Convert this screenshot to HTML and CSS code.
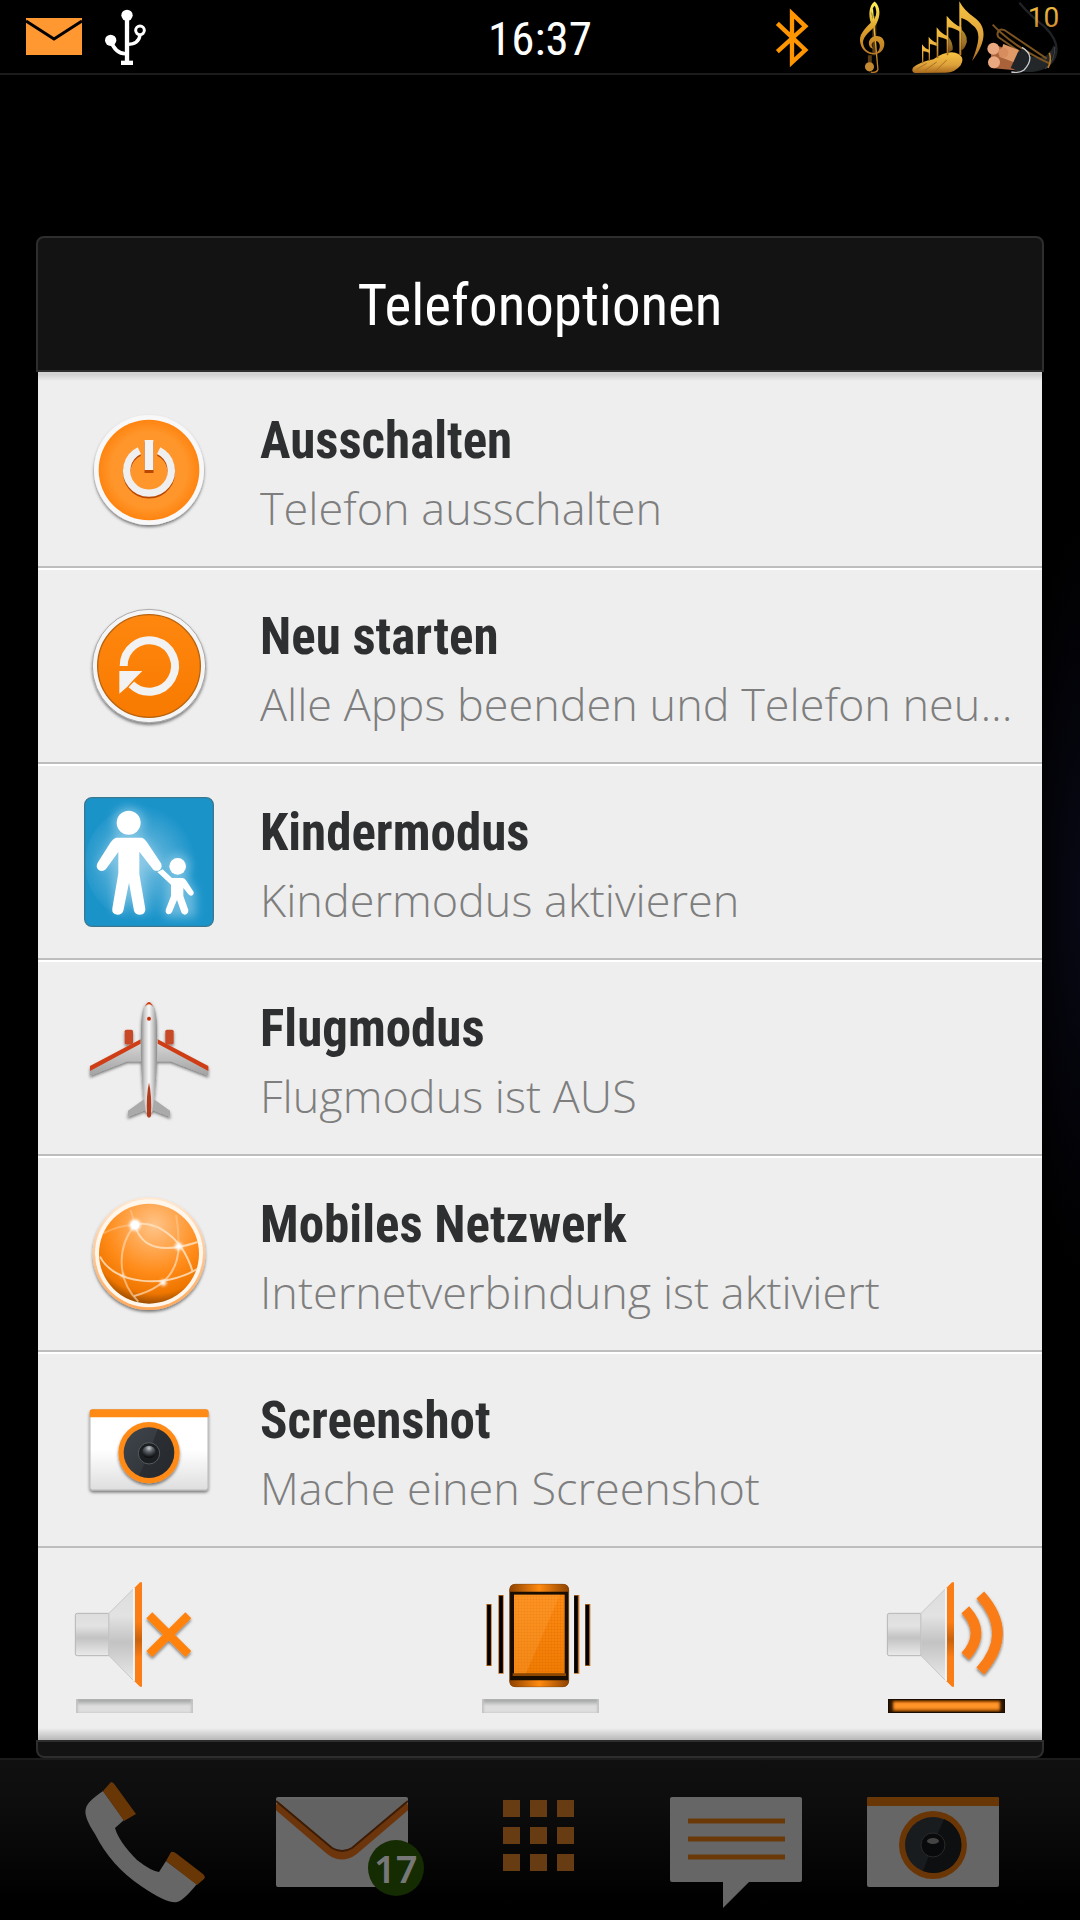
FILE: index.html
```html
<!DOCTYPE html>
<html lang="de">
<head>
<meta charset="utf-8">
<meta name="viewport" content="width=device-width, initial-scale=1">
<title>Telefonoptionen</title>
<link rel="stylesheet" href="styles.css">
</head>
<body>
<svg class="defs" aria-hidden="true">
  <defs>
    <linearGradient id="disc" x1="0" y1="0" x2="0" y2="1"><stop offset="0" stop-color="#ff870f"/><stop offset="1" stop-color="#f87a00"/></linearGradient>
    <radialGradient id="discSoft"><stop offset=".75" stop-color="#ff962b"/><stop offset="1" stop-color="#ff8410"/></radialGradient>
    <radialGradient id="sky" cx=".45" cy=".5" r=".5"><stop offset="0" stop-color="#7cc1e2"/><stop offset=".5" stop-color="#4dabd6"/><stop offset="1" stop-color="#1a93c9"/></radialGradient>
    <linearGradient id="hull"><stop offset="0" stop-color="#8a8a8a"/><stop offset=".25" stop-color="#d0d0d0"/><stop offset=".5" stop-color="#f8f8f8"/><stop offset=".75" stop-color="#c8c8c8"/><stop offset="1" stop-color="#8a8a8a"/></linearGradient>
    <linearGradient id="wing" x1="0" y1="0" x2="0" y2="1"><stop offset="0" stop-color="#dadada"/><stop offset="1" stop-color="#a2a2a2"/></linearGradient>
    <radialGradient id="globe" cx=".55" cy=".22" r=".8"><stop offset="0" stop-color="#ffc489"/><stop offset=".3" stop-color="#ffa750"/><stop offset=".6" stop-color="#ff8a17"/><stop offset=".85" stop-color="#ee7600"/><stop offset="1" stop-color="#8e4600"/></radialGradient>
    <linearGradient id="ring" x1="0" y1="0" x2="0" y2="1"><stop offset="0" stop-color="#ffe8d2"/><stop offset="1" stop-color="#ffa85a"/></linearGradient>
    <linearGradient id="case" x1="0" y1="0" x2="0" y2="1"><stop offset=".5" stop-color="#fff"/><stop offset="1" stop-color="#dedede"/></linearGradient>
    <linearGradient id="lens" x1="0" y1="0" x2="1" y2="1"><stop offset="0" stop-color="#3f454b"/><stop offset="1" stop-color="#2b2f34"/></linearGradient>
    <radialGradient id="glint" cx=".5" cy=".2" r=".7"><stop offset="0" stop-color="#c8ccd0"/><stop offset=".4" stop-color="#60666d"/><stop offset="1" stop-color="#101214"/></radialGradient>
    <linearGradient id="horn" x1="0" y1="0" x2="0" y2="1"><stop offset="0" stop-color="#ddd"/><stop offset=".3" stop-color="#e2e2e2"/><stop offset=".58" stop-color="#c3c3c3"/><stop offset="1" stop-color="#eaeaea"/></linearGradient>
    <linearGradient id="rim" x1="0" y1="0" x2="0" y2="1"><stop offset=".38" stop-color="#fb7d15"/><stop offset=".55" stop-color="#c9630e"/><stop offset=".72" stop-color="#fb7d15"/></linearGradient>
    <linearGradient id="cap"><stop offset="0" stop-color="#8e4300"/><stop offset=".5" stop-color="#ff8a10"/><stop offset="1" stop-color="#8e4300"/></linearGradient>
    <linearGradient id="screen" x1="0" y1="0" x2="0" y2="1"><stop offset="0" stop-color="#ff8b14"/><stop offset="1" stop-color="#f27c02"/></linearGradient>
    <linearGradient id="gold" x1="0" y1="0" x2="0" y2="1"><stop offset="0" stop-color="#fff35a"/><stop offset=".5" stop-color="#e0a42c"/><stop offset="1" stop-color="#b87824"/></linearGradient>
    <linearGradient id="brass" x1="0" y1="0" x2="0" y2="1"><stop offset="0" stop-color="#f7c440"/><stop offset=".6" stop-color="#dea23c"/><stop offset="1" stop-color="#a86a1c"/></linearGradient>
    <filter id="drop" x="-20%" y="-20%" width="140%" height="150%"><feDropShadow dx="0" dy="6" stdDeviation="5" flood-opacity=".5"/></filter>
    <filter id="glow" x="-40%" y="-40%" width="180%" height="180%"><feGaussianBlur stdDeviation="14"/></filter>
    <filter id="soft" x="-100%" y="-100%" width="300%" height="300%"><feGaussianBlur stdDeviation="4"/></filter>
    <pattern id="mesh" width="9" height="9" patternUnits="userSpaceOnUse"><path d="M0 0H9M0 0V9" stroke="#c96200" stroke-width="3" opacity=".4"/></pattern>
    <clipPath id="globeClip"><circle cx="237" cy="821" r="150"/></clipPath>
    <g id="speaker">
      <path d="M322 256q0-6 6-6H423V377H328q-6 0-6-6Z" fill="url(#horn)" stroke="#b5b5b5" stroke-width="3"/>
      <path d="M423 250L501 172V456L423 377Z" fill="url(#horn)" stroke="#c9c9c9" stroke-width="3"/>
      <path d="M498 174V453" stroke="#fff" stroke-width="4"/>
      <path d="M501 172L516 157H522V470H516L501 455Z" fill="url(#rim)"/>
    </g>
  </defs>
</svg>

<header class="status">
  <div class="status-left">
    <svg width="56" height="38" viewBox="0 0 56 38" role="img" aria-label="Neue Nachricht"><path d="M0 0H56V37H0Z" fill="#ff9830"/><path d="M0 3L28 21L56 3" fill="none" stroke="#000" stroke-width="3"/></svg>
    <svg width="42" height="56" viewBox="0 0 126 168" role="img" aria-label="USB" fill="none" stroke="#fff" stroke-width="13"><circle cx="66" cy="19" r="17" fill="#fff" stroke="none"/><path d="M66 20V158"/><path d="M48 163H84" stroke-width="16"/><path d="M17 95Q32 137 66 134" stroke-width="11"/><path d="M66 106Q101 107 105 78" stroke-width="10"/><circle cx="17" cy="94" r="17" fill="#fff" stroke="none"/><circle cx="105" cy="64" r="13" stroke-width="9" fill="#000"/></svg>
  </div>
  <time class="clock">16:37</time>
  <div class="status-right">
    <svg viewBox="132 0 222 219" role="img" aria-label="Bluetooth"><path d="M172 70L256 150L216 187V41L256 79L172 155" fill="none" stroke="#ff9500" stroke-width="13"/></svg>
    <svg viewBox="354 0 222 225" role="img" aria-label="Musik" fill="none" stroke="url(#gold)"><path d="M449 205L449 170M463 50V170" stroke="#5a3d14" stroke-width="12"/><path d="M457 28L474 214Q470 226 452 222" stroke-width="4"/><path d="M464 5C445 18 445 48 452 70C430 92 414 108 420 134C426 160 450 172 472 166C493 160 500 132 488 118C474 104 448 112 446 132C446 146 454 150 460 150C450 138 456 126 468 126C482 128 484 150 472 160C452 170 430 154 428 132C428 108 454 96 468 76C484 50 482 20 464 5ZM464 18C472 32 470 52 460 62C452 48 454 28 464 18Z" fill="url(#gold)" stroke="none" fill-rule="evenodd"/><circle cx="448" cy="206" r="14" fill="#c48a32" stroke="none"/></svg>
    <svg viewBox="576 0 222 219" role="img" aria-label="Signal"><g fill="url(#brass)"><path d="M580 202Q604 184 640 178Q676 152 706 158Q738 168 722 196Q704 220 672 218L584 219Q572 214 580 202Z"/><path d="M718 4Q732 32 766 55C804 84 796 130 756 184C774 134 788 96 756 74Q740 58 724 54V166H718Z"/><path d="M680 47Q702 74 724 82V98Q704 84 685 82V166H680Z"/><path d="M650 82Q666 104 684 108V120Q668 112 655 110V174H650Z"/><path d="M626 110Q636 124 650 128V138Q640 134 630 132V182H626Z"/><path d="M606 133Q616 148 630 150V160Q618 154 610 154V190H606Z"/><path d="M724 88Q750 112 736 138Q730 150 724 150ZM685 110Q700 128 698 150L685 158Z" opacity=".7"/></g><path d="M590 208L620 190M614 212L650 186M646 214L680 180" stroke="#a86f22" stroke-width="3"/></svg>
    <svg viewBox="798 0 222 219" role="img" aria-label="Akku 10 Prozent" fill="none"><path d="M898 8Q930 46 976 82Q1020 126 1006 168Q988 218 900 212" stroke="#202225" stroke-width="7"/><path d="M926 166Q980 190 1002 134Q1006 206 930 216Q900 214 880 200Z" fill="#24272a"/><path d="M1004 140Q1006 180 976 206" stroke="#3a3f44" stroke-width="4"/><path d="M818 74L838 94Q900 150 988 190M838 90Q828 102 836 112L906 160M838 90Q850 86 862 96L980 176" stroke="#7a5320" stroke-width="6"/><path d="M988 158Q996 180 984 204" stroke="#b67a24" stroke-width="5"/><path d="M814 132L900 158L896 212L812 204Z" fill="#a9623a"/><path d="M850 132L896 150L890 190L838 170Z" fill="#e09a68"/><path d="M910 146Q944 178 902 216L872 204L894 156Z" fill="#202428"/><path d="M906 142Q950 168 912 210Q898 220 874 216" stroke="#c8ccd0" stroke-width="4"/><circle cx="820" cy="146" r="18" fill="#eaa880"/><circle cx="822" cy="187" r="18" fill="#eba982"/><circle cx="850" cy="158" r="15" fill="#d78d5e"/><text x="1018" y="80" text-anchor="end" class="battery-text" fill="url(#brass)">10</text></svg>
  </div>
</header>

<main class="stage">
  <section class="dialog" role="dialog" aria-labelledby="dialog-title">
    <h1 class="dialog-head" id="dialog-title">Telefonoptionen</h1>
    <ul class="options">
      <li><button class="option" type="button">
        <svg viewBox="0 0 390 390" aria-hidden="true"><circle cx="195" cy="195" r="165" fill="#f8f8f8" filter="url(#drop)"/><circle cx="195" cy="195" r="151" fill="url(#discSoft)"/><path d="M224 142A67 67 0 1 1 166 142" fill="none" stroke="#b84700" stroke-width="22"/><path d="M195 110V204" stroke="#b84700" stroke-width="27"/><path d="M224 137A67 67 0 1 1 166 137" fill="none" stroke="#efefef" stroke-width="22"/><path d="M195 105V195" stroke="#f2f2f2" stroke-width="26"/></svg>
        <span class="copy"><strong>Ausschalten</strong><span>Telefon ausschalten</span></span></button></li>
      <li><button class="option" type="button">
        <svg viewBox="42 33 390 390" aria-hidden="true"><circle cx="237" cy="228" r="170" fill="#f5f5f5" stroke="#888" stroke-width="2" filter="url(#drop)"/><circle cx="237" cy="228" r="154" fill="url(#disc)" stroke="#b8640f" stroke-width="4"/><path d="M161 228A77 77 0 1 1 184 283" fill="none" stroke="#f2f2f2" stroke-width="24"/><path d="M148 243H217L192 268L172 290L148 311Z" fill="#f2f2f2"/></svg>
        <span class="copy"><strong>Neu starten</strong><span>Alle Apps beenden und Telefon neu...</span></span></button></li>
      <li><button class="option" type="button">
        <svg viewBox="42 621 390 390" aria-hidden="true"><rect x="44" y="623" width="386" height="386" rx="22" fill="#1a93c9"/><circle cx="220" cy="820" r="175" fill="url(#sky)"/>
          <g fill="#9bd2eb" stroke="#9bd2eb" stroke-width="24" filter="url(#glow)" opacity=".6"><circle cx="176" cy="697" r="34"/><path d="M146 745H208L270 835L210 800V860L215 965L177 880L144 965V790L95 830Z"/><circle cx="323" cy="829" r="24"/><path d="M302 865H340L365 908V970H295Z"/></g>
          <rect x="44" y="623" width="386" height="386" rx="22" fill="none" stroke="#3a7891" stroke-width="4"/>
          <g fill="#fff"><circle cx="176" cy="698" r="36"/><circle cx="323" cy="829" r="25"/><path d="M138 743H216Q222 745 230 755L273 820Q278 832 270 839Q260 846 250 839L208 785V852L226 957Q226 974 210 974Q196 974 192 962L177 878L160 962Q156 974 142 974Q124 972 127 955L145 850V786L108 837Q98 847 86 840Q76 831 83 818L122 757Q130 745 138 743Z"/><path d="M262 846L278 838L306 864H338Q344 865 349 872L371 906Q372 916 364 917Q358 917 354 911L340 894V918L355 960Q355 973 344 974Q336 973 334 967L321 930L306 966Q302 974 294 973Q284 969 288 957L303 918V884Z"/></g></svg>
        <span class="copy"><strong>Kindermodus</strong><span>Kindermodus aktivieren</span></span></button></li>
      <li><button class="option" type="button">
        <svg viewBox="42 39 390 390" aria-hidden="true"><g filter="url(#drop)"><path d="M212 180L60 262V287L172 244H302L415 287V262L263 180Z" fill="url(#wing)"/><path d="M212 178L60 258V273L212 191ZM263 178L415 258V273L263 191Z" fill="#cf3d12"/><rect x="164" y="149" width="25" height="44" rx="5" fill="#c84a28"/><rect x="286" y="149" width="25" height="44" rx="5" fill="#c84a28"/><path d="M222 358L174 392L173 411L224 391H250L301 411L300 392L252 358Z" fill="#aaa"/><path d="M237 63Q220 66 214 120Q209 220 219 340L228 395Q237 405 246 395L255 340Q265 220 260 120Q254 66 237 63Z" fill="url(#hull)"/></g><path d="M225 80Q237 52 249 80Q237 66 225 80Z" fill="#cf3d12"/><circle cx="237" cy="116" r="6" fill="#c7300a"/><path d="M237 308Q246 345 243 408Q237 418 231 408Q228 345 237 308Z" fill="#b33c1c"/></svg>
        <span class="copy"><strong>Flugmodus</strong><span>Flugmodus ist AUS</span></span></button></li>
      <li><button class="option" type="button">
        <svg viewBox="42 627 390 390" aria-hidden="true"><circle cx="237" cy="821" r="169" fill="url(#ring)" filter="url(#drop)"/><circle cx="237" cy="820" r="162" fill="#fff6ec"/><circle cx="237" cy="821" r="150" fill="url(#globe)"/><g clip-path="url(#globeClip)" fill="none" stroke="#ffe0bd" stroke-width="6" opacity=".85"><path d="M195 735C235 720 330 750 368 875"/><path d="M195 735C140 800 140 900 205 965" opacity=".7"/><path d="M195 735C215 810 285 820 390 784"/><path d="M326 799C325 855 300 920 192 948" opacity=".8"/><path d="M90 830C130 910 280 930 385 865"/><path d="M195 735Q150 735 100 760M195 735L182 690M326 799Q325 740 318 705" opacity=".4"/></g><g fill="#fff" filter="url(#soft)"><circle cx="195" cy="735" r="17"/><circle cx="326" cy="799" r="11"/><circle cx="280" cy="908" r="9"/><circle cx="158" cy="887" r="6" opacity=".6"/></g><circle cx="195" cy="735" r="12" fill="#fff"/></svg>
        <span class="copy"><strong>Mobiles Netzwerk</strong><span>Internetverbindung ist aktiviert</span></span></button></li>
      <li><button class="option" type="button">
        <svg viewBox="42 45 390 390" aria-hidden="true"><rect x="60" y="119" width="354" height="241" rx="8" fill="url(#case)" stroke="#b8b8b8" stroke-width="3" filter="url(#drop)"/><path d="M59 142V126Q59 118 67 118H408Q416 118 416 126V142Z" fill="#ff8a15"/><circle cx="237" cy="248" r="92" fill="#ff8a15" filter="url(#drop)"/><circle cx="237" cy="248" r="76" fill="url(#lens)"/><path d="M264 176A76 76 0 0 1 207 318L237 248Z" fill="#1f2226" opacity=".5"/><circle cx="237" cy="250" r="32" fill="#1c1f22" stroke="#555a5f" stroke-width="3"/><ellipse cx="237" cy="246" rx="20" ry="19" fill="url(#glint)"/></svg>
        <span class="copy"><strong>Screenshot</strong><span>Mache einen Screenshot</span></span></button></li>
    </ul>
    <div class="sound" role="group" aria-label="Klingelmodus">
      <button class="mode" type="button" aria-label="Lautlos" aria-pressed="false">
        <svg viewBox="324 138 351 348" aria-hidden="true"><use href="#speaker"/><path d="M544 256L661 372M661 256L544 372" stroke="#ff820f" stroke-width="25" filter="url(#drop)"/></svg><span class="led"></span></button>
      <button class="mode" type="button" aria-label="Vibration" aria-pressed="false">
        <svg viewBox="0 138 351 348" aria-hidden="true"><path d="M21 222V408M57 195V431M284 195V431M317 222V408" stroke="#c06f20" stroke-width="16"/><path d="M21 224V406M57 197V429M282 197V429M316 224V406" stroke="#000" stroke-width="11"/><rect x="83" y="163" width="177" height="307" rx="17" fill="#190c00" stroke="#7a3d00" stroke-width="2"/><path d="M83 185V178Q83 163 98 163H245Q260 163 260 178V185ZM83 451H260V455Q258 470 245 470H98Q83 470 83 455Z" fill="url(#cap)"/><path d="M92 430H252V438H92Z" fill="#8e4700"/><rect x="96" y="194" width="152" height="236" fill="url(#screen)"/><rect x="96" y="194" width="152" height="236" fill="url(#mesh)"/><path d="M96 194H234L132 430H96Z" fill="#ffae50" opacity=".25"/></svg><span class="led"></span></button>
      <button class="mode" type="button" aria-label="Laut" aria-pressed="true">
        <svg viewBox="324 138 351 348" aria-hidden="true"><use href="#speaker"/><path d="M556 239Q620 309 556 379M601 195Q704 309 601 423" fill="none" stroke="#f97c14" stroke-width="31" filter="url(#drop)"/></svg><span class="led"></span></button>
    </div>
    <div class="dialog-foot"></div>
  </section>
</main>

<nav class="dock" aria-label="Schnellstart">
  <a href="#telefon" aria-label="Telefon"><svg viewBox="0 0 132 132" aria-hidden="true"><path d="M24 9L45 38L36 46Q40 60 58 78Q72 89 80 90L87 79L118 102Q104 119 98 120Q88 122 62 104Q32 84 16 52Q4 34 7 26Q8 20 24 9Z" fill="#666"/><path d="M24 9L32 0Q34 0 36 3L57 32L45 39ZM87 79L92 70Q94 69 98 72L124 92Q127 95 125 97L118 103Z" fill="#693605"/></svg></a>
  <a href="#mail" aria-label="Mail, 17 ungelesen"><svg viewBox="0 0 132 132" aria-hidden="true"><rect y="15" width="132" height="90" rx="2" fill="#676767"/><path d="M0 17H132L76 67Q66 72 56 67Z" fill="#626262"/><path d="M0 23L54 69Q66 78 78 69L132 23" fill="none" stroke="#6d350b" stroke-width="8"/><path d="M0 19L56 66Q66 72 76 66L132 19" fill="none" stroke="#3c1c06" stroke-width="2"/></svg><span class="badge">17</span></a>
  <a href="#apps" aria-label="Alle Apps"><svg viewBox="0 0 132 132" aria-hidden="true"><path d="M30 26.500H47M57 26.500H74M84 26.500H101M30 53.500H47M57 53.500H74M84 53.500H101M30 80.500H47M57 80.500H74M84 80.500H101" stroke="#683c12" stroke-width="17"/></svg></a>
  <a href="#nachrichten" aria-label="Nachrichten"><svg viewBox="0 0 132 132" aria-hidden="true"><path d="M2 15H130Q132 15 132 17V98Q132 100 130 100H79L53 126V100H2Q0 100 0 98V17Q0 15 2 15Z" fill="#666"/><path d="M18 39H115M18 57H115M18 75H115" stroke="#6b3808" stroke-width="5"/></svg></a>
  <a href="#kamera" aria-label="Kamera"><svg viewBox="0 0 132 132" aria-hidden="true"><rect y="15" width="132" height="90" rx="2" fill="#666"/><path d="M0 24V17Q0 15 2 15H130Q132 15 132 17V24Z" fill="#693605"/><circle cx="66" cy="63" r="34" fill="#6b3605"/><circle cx="66" cy="63" r="28" fill="#191c1f"/><path d="M77 37A28 28 0 0 1 56 89L66 63Z" fill="#0d0f11"/><circle cx="66" cy="63" r="12" fill="#090a0b" stroke="#2a2a2a"/><ellipse cx="66" cy="59" rx="6" ry="3" fill="#444"/></svg></a>
</nav>
</body>
</html>
```
FILE: styles.css
```css
* { box-sizing: border-box; }

body {
  margin: 0;
  min-height: 100vh;
  display: flex;
  flex-direction: column;
  background: radial-gradient(ellipse 60px 380px at 100% 900px, #070814, #000);
  color: #fff;
  font-family: "Roboto Condensed", "Liberation Sans Narrow", Roboto, sans-serif;
}

svg { display: block; }
.defs { position: absolute; width: 0; height: 0; }

button {
  border: 0;
  padding: 0;
  background: none;
  font: inherit;
  color: inherit;
  text-align: left;
  cursor: pointer;
}

/* status bar */
.status {
  display: grid;
  grid-template-columns: 1fr auto 1fr;
  align-items: center;
  height: 75px;
  padding: 0 20px;
  border-bottom: 2px solid #1b1b1b;
  background: #000;
}
.status-left { display: flex; align-items: center; gap: 23px; padding-left: 6px; }
.status-right { display: flex; justify-content: flex-end; }
.status-right svg { width: 74px; height: 73px; }
.clock { padding-top: 4px; font-size: 47px; font-weight: 400; line-height: 68px; }
.battery-text { font-family: Roboto, sans-serif; font-size: 84px; }

/* options dialog */
.stage { flex: 1; padding: 161px 36px 0; }
.dialog { display: flex; flex-direction: column; }
.dialog-head {
  margin: 0;
  height: 136px;
  border: 2px solid #2e2e2e;
  border-radius: 8px 8px 0 0;
  background: #131313;
  font-size: 57px;
  font-weight: 400;
  line-height: 136px;
  text-align: center;
}
.options {
  margin: 0 2px;
  padding: 0;
  list-style: none;
  background: #eee;
}
.option {
  display: flex;
  align-items: center;
  gap: 46px;
  width: 100%;
  height: 196px;
  padding: 0 30px 0 46px;
  border-top: 2px solid #fff;
  border-bottom: 2px solid #bdbdbd;
}
.options li:first-child .option {
  border-top-color: #d4d4d4;
  background: linear-gradient(#cfcfcf, #eee 7px);
}
.option svg { flex: none; width: 130px; height: 130px; }
.copy { display: flex; flex-direction: column; min-width: 0; padding-top: 4px; white-space: nowrap; }
.copy strong { color: #2e2f30; font-size: 51px; font-weight: 700; line-height: 72px; }
.copy span { color: #7e7e7e; font-family: "Open Sans", sans-serif; font-size: 45px; font-weight: 300; line-height: 62px; }

.sound {
  display: flex;
  justify-content: space-between;
  height: 192px;
  margin: 0 2px;
  padding: 28px 37px 0 38px;
  background: linear-gradient(#eee 180px, #b8b8b8);
}
.mode { display: flex; flex-direction: column; gap: 7px; width: 117px; }
.mode svg { width: 117px; height: 116px; overflow: visible; }
.led {
  width: 117px;
  height: 14px;
  background: linear-gradient(#999d9a, #dedede 7px);
  box-shadow: inset 2px 0 2px #c4c4c4, inset -2px 0 2px #c4c4c4;
}
.mode[aria-pressed="true"] .led {
  border: 1px solid #1a0c00;
  background: linear-gradient(#b55c00, #ff9429 4px, #ff9429 7px, #b55c00);
  box-shadow: inset 4px 0 3px #2b1400, inset -4px 0 3px #2b1400;
}
.dialog-foot {
  height: 18px;
  border: 2px solid #2e2e2e;
  border-radius: 0 0 8px 8px;
  background: #131313;
}

/* dock */
.dock {
  display: grid;
  grid-template-columns: repeat(5, 1fr);
  justify-items: center;
  height: 162px;
  padding: 22px 48px 0 46px;
  border-top: 2px solid #1c1c1c;
  background: linear-gradient(#101010, #0d0d0d 45px, #000 145px);
}
.dock a { position: relative; width: 132px; height: 132px; color: #777; text-decoration: none; }
.badge {
  position: absolute;
  top: 58px;
  right: -16px;
  width: 56px;
  height: 56px;
  border-radius: 50%;
  background: #152b02;
  font-family: "Noto Sans", sans-serif;
  font-size: 38px;
  font-weight: 600;
  line-height: 56px;
  text-align: center;
}
```
